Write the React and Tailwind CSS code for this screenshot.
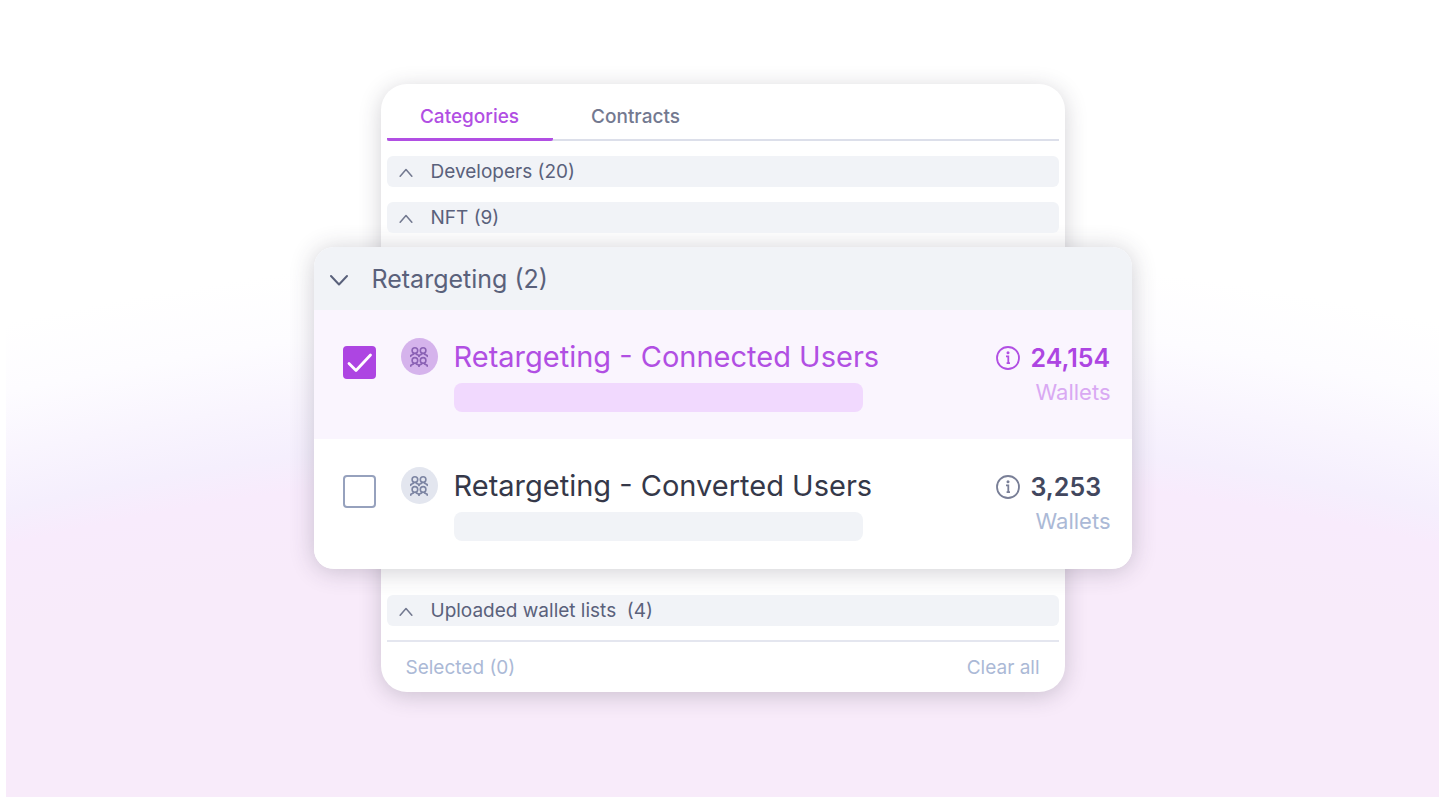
import { useState } from "react";

function Chevron({ up, className }) {
  return (
    <svg viewBox="0 0 18 12" className={className} fill="none" stroke="currentColor" strokeLinecap="round" strokeLinejoin="round" aria-hidden="true">
      <path d={up ? "M1.500 10.500 9 2l7.500 8.500" : "M1 2l8 8.500L17 2"} />
    </svg>
  );
}

function Person({ x, y }) {
  return (
    <g transform={`translate(${x} ${y})`}>
      <circle cx="5" cy="3.600" r="2.800" />
      <path d="M3.600 6.100v1.100L.9 8.400v1M6.400 6.100v1.100l2.700 1.200v1" />
    </g>
  );
}

function GroupIcon() {
  return (
    <svg viewBox="0 0 20 20" className="size-5" fill="none" stroke="currentColor" strokeWidth="1.600" strokeLinecap="round" strokeLinejoin="round" aria-hidden="true">
      <Person x={0.9} y={0} />
      <Person x={9.1} y={0} />
      <Person x={0.9} y={9.8} />
      <Person x={9.1} y={9.8} />
    </svg>
  );
}

function InfoIcon() {
  return (
    <svg viewBox="0 0 24 24" className="size-6" fill="none" stroke="currentColor" aria-hidden="true">
      <circle cx="12" cy="12" r="11" strokeWidth="1.800" />
      <circle cx="12" cy="6.800" r="1.500" fill="currentColor" stroke="none" />
      <path d="M10 10.300h2.300V17.500M10.600 17.200h3.400" strokeWidth="1.800" />
    </svg>
  );
}

function CategoryRow({ label }) {
  return (
    <button type="button" className="flex h-[31px] w-full items-center gap-[18px] rounded-md bg-[#f1f3f7] pt-0.5 pl-3 text-left text-[19px] text-[#5a617b]">
      <Chevron up className="w-[14px] stroke-2 text-[#737990]" />
      <span className="whitespace-pre">{label}</span>
    </button>
  );
}

const tones = {
  on: {
    row: "bg-[#faf5fe]",
    badge: "bg-[#d5b3ec] text-[#8b62b5]",
    name: "text-[#b14fe3]",
    bar: "bg-[#f1d9fe]",
    info: "text-[#b14fe3]",
    count: "text-[#ad45e2]",
    unit: "text-[#d9a9f3]",
  },
  off: {
    row: "bg-white",
    badge: "bg-[#e3e6ef] text-[#7d85a3]",
    name: "text-[#353849]",
    bar: "bg-[#f1f3f7]",
    info: "text-[#797f97]",
    count: "text-[#42475e]",
    unit: "text-[#abb9d6]",
  },
};

function AudienceRow({ id, name, count, defaultChecked }) {
  const [checked, setChecked] = useState(defaultChecked);
  const t = checked ? tones.on : tones.off;
  return (
    <li className={`flex items-start pt-7 pr-[21px] pb-[27px] pl-[29px] ${t.row}`}>
      <span className="mt-2 grid size-[33px] shrink-0">
        <input
          id={id}
          type="checkbox"
          checked={checked}
          onChange={(e) => setChecked(e.target.checked)}
          className="col-start-1 row-start-1 appearance-none rounded-[4px] border-2 border-[#96a1bd] bg-white checked:border-[#ad45e2] checked:bg-[#ad45e2]"
        />
        {checked && (
          <svg viewBox="0 0 33 33" className="pointer-events-none col-start-1 row-start-1" fill="none" stroke="#fff" strokeWidth="2.800" strokeLinecap="round" strokeLinejoin="round" aria-hidden="true">
            <path d="M6 17.500l7 7L27.500 9" />
          </svg>
        )}
      </span>
      <span className={`ml-[25px] grid size-[37px] shrink-0 place-items-center rounded-full ${t.badge}`}>
        <GroupIcon />
      </span>
      <div className="ml-4 min-w-0 flex-1">
        <label htmlFor={id} className={`block text-[29px] leading-[37px] ${t.name}`}>{name}</label>
        <div className={`mt-2 h-[29px] w-[409px] max-w-full rounded-lg ${t.bar}`} />
      </div>
      <div className="w-[115px] shrink-0">
        <div className="flex h-10 items-center gap-[11px]">
          <span className={t.info}><InfoIcon /></span>
          <span className={`text-[25px] leading-8 font-semibold ${t.count}`}>{count}</span>
        </div>
        <div className={`text-right text-[22px] leading-7 ${t.unit}`}>Wallets</div>
      </div>
    </li>
  );
}

export default function App() {
  return (
    <div className="flex min-h-screen bg-white pr-px pl-1.5 font-['Inter',sans-serif]">
      <main className="flex w-full justify-center bg-[radial-gradient(circle_3300px_at_50%_3544px,#f8ebfa_0px,#f8ebfa_3000px,#f8ebfc_3083px,#f5effd_3118px,#f9f5fe_3172px,#fdfcff_3232px,#fff_3300px)] px-20 pt-[84px] pb-[105px]">
        <div className="w-full max-w-[684px] self-start rounded-[26px] bg-white shadow-[0_4px_22px_rgba(50,45,65,0.22)]">
          <div className="px-1.5">
            <div role="tablist" className="flex h-[57px] border-b-2 border-[#dcdfea] text-[19px] font-medium">
              <button type="button" role="tab" aria-selected="true" className="h-[57px] w-[166px] rounded-b-xs border-b-[3px] border-[#b14fe3] pt-3 text-[#b14fe3]">Categories</button>
              <button type="button" role="tab" aria-selected="false" className="h-[57px] w-[166px] border-b-[3px] border-transparent pt-3 text-[#737990]">Contracts</button>
            </div>
            <div className="mt-[15px] flex flex-col gap-[15px]">
              <CategoryRow label="Developers (20)" />
              <CategoryRow label="NFT (9)" />
            </div>
          </div>
          <section className="-mx-[67px] mt-[14px] overflow-hidden rounded-[20px] bg-white shadow-[0_2px_24px_rgba(50,45,65,0.24)]">
            <button type="button" className="flex h-[63px] w-full items-center gap-6 bg-[#f1f3f7] pt-0.5 pl-4 text-left text-[25px] text-[#5a617b]">
              <Chevron className="w-[18px] stroke-2" />
              <span>Retargeting (2)</span>
            </button>
            <ul className="pb-px">
              <AudienceRow id="connected" name="Retargeting - Connected Users" count="24,154" defaultChecked />
              <AudienceRow id="converted" name="Retargeting - Converted Users" count="3,253" defaultChecked={false} />
            </ul>
          </section>
          <div className="mt-[26px] px-1.5">
            <CategoryRow label="Uploaded wallet lists  (4)" />
            <div className="mt-[14px] flex h-[52px] items-center justify-between border-t-2 border-[#e4e6ef] px-[19px] pt-0.5 text-[19px] text-[#abb9d6]">
              <span>Selected (0)</span>
              <button type="button">Clear all</button>
            </div>
          </div>
        </div>
      </main>
    </div>
  );
}
